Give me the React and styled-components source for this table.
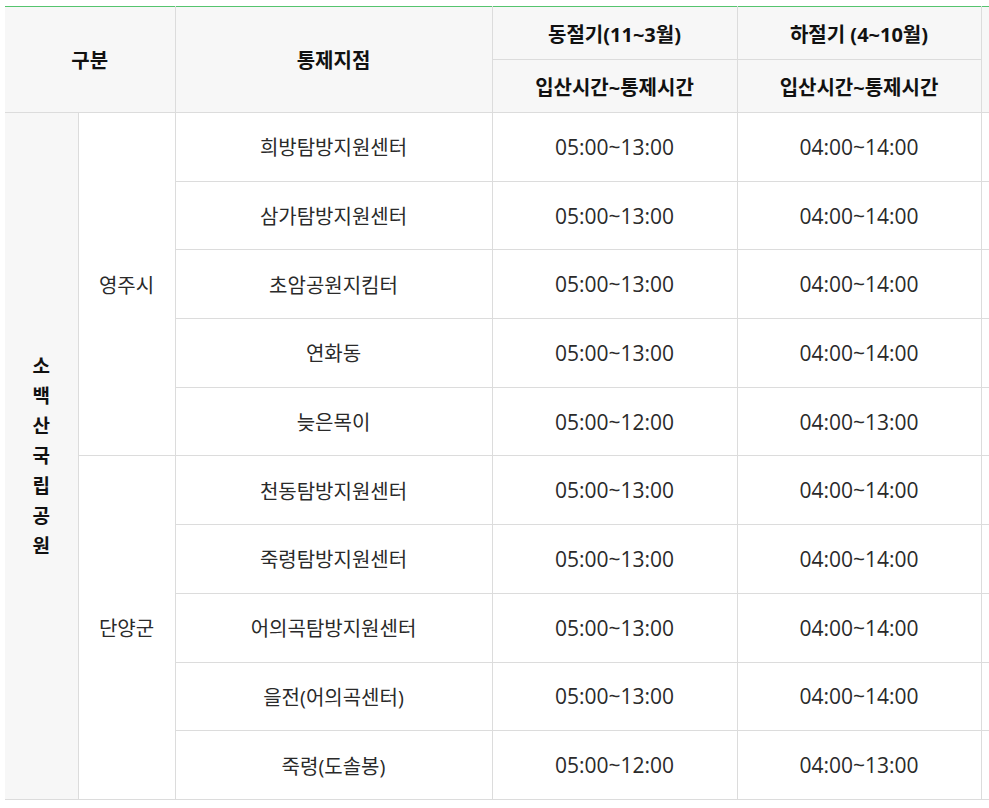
import styled, { createGlobalStyle } from "styled-components";

const GlobalStyle = createGlobalStyle`
  html, body {
    margin: 0;
    padding: 0;
    background: #fff;
  }
  body {
    font-family: "Open Sans", "Noto Sans CJK KR", sans-serif;
    color: #333;
  }
`;

const rows = [
  { name: "희방탐방지원센터", winter: "05:00~13:00", summer: "04:00~14:00" },
  { name: "삼가탐방지원센터", winter: "05:00~13:00", summer: "04:00~14:00" },
  { name: "초암공원지킴터", winter: "05:00~13:00", summer: "04:00~14:00" },
  { name: "연화동", winter: "05:00~13:00", summer: "04:00~14:00" },
  { name: "늦은목이", winter: "05:00~12:00", summer: "04:00~13:00" },
  { name: "천동탐방지원센터", winter: "05:00~13:00", summer: "04:00~14:00" },
  { name: "죽령탐방지원센터", winter: "05:00~13:00", summer: "04:00~14:00" },
  { name: "어의곡탐방지원센터", winter: "05:00~13:00", summer: "04:00~14:00" },
  { name: "을전(어의곡센터)", winter: "05:00~13:00", summer: "04:00~14:00" },
  { name: "죽령(도솔봉)", winter: "05:00~12:00", summer: "04:00~13:00" },
];

const groups = [
  { city: "영주시", from: 0, span: 5 },
  { city: "단양군", from: 5, span: 5 },
];

const App = () => {
  return (
    <>
      <GlobalStyle />
      <Wrapper>
        <Table>
          <colgroup>
            <col style={{ width: 73 }} />
            <col style={{ width: 97 }} />
            <col style={{ width: 317 }} />
            <col style={{ width: 245 }} />
            <col style={{ width: 244 }} />
            <col style={{ width: 200 }} />
          </colgroup>
          <thead>
            <HeadRow>
              <Th colSpan={2} rowSpan={2}>구분</Th>
              <Th rowSpan={2}>통제지점</Th>
              <Th>동절기(11~3월)</Th>
              <Th>하절기 (4~10월)</Th>
              <Th rowSpan={2}></Th>
            </HeadRow>
            <HeadRow>
              <Th>입산시간~통제시간</Th>
              <Th>입산시간~통제시간</Th>
            </HeadRow>
          </thead>
          <tbody>
            {rows.map((row, i) => {
              const group = groups.find((g) => g.from === i);
              return (
                <BodyRow key={row.name}>
                  {i === 0 && (
                    <ParkCell rowSpan={rows.length}>
                      {"소백산국립공원".split("").map((ch, k) => (
                        <VerticalChar key={k}>{ch}</VerticalChar>
                      ))}
                    </ParkCell>
                  )}
                  {group && <Td rowSpan={group.span}>{group.city}</Td>}
                  <Td>{row.name}</Td>
                  <Td $time>{row.winter}</Td>
                  <Td $time>{row.summer}</Td>
                  <Td></Td>
                </BodyRow>
              );
            })}
          </tbody>
        </Table>
      </Wrapper>
    </>
  );
};

export default App;

const Wrapper = styled.div`
  width: 989px;
  overflow: hidden;
  padding: 6px 0 0 5px;
  box-sizing: border-box;
`;

const Table = styled.table`
  width: 1176px;
  table-layout: fixed;
  border-collapse: collapse;
  border-top: 1px solid #55c46e;
  border-bottom: 1px solid #dcdcdc;
`;

const HeadRow = styled.tr`
  height: 53px;
`;

const Th = styled.th`
  background: #f7f7f7;
  border: 1px solid #dcdcdc;
  border-top: none;
  border-left: none;
  color: #111;
  font-size: 20px;
  font-weight: 700;
  text-align: center;
  vertical-align: middle;
  padding: 0;
`;

const BodyRow = styled.tr`
  height: 68.7px;
`;

const Td = styled.td`
  border: 1px solid #dcdcdc;
  border-left: none;
  color: #2a2a2a;
  font-size: ${(p) => (p.$time ? "21px" : "20px")};
  text-align: center;
  vertical-align: middle;
  padding: 0;
`;

const ParkCell = styled.td`
  background: #f7f7f7;
  border: 1px solid #dcdcdc;
  border-left: none;
  text-align: center;
  vertical-align: middle;
  padding: 0;
`;

const VerticalChar = styled.span`
  display: block;
  color: #111;
  font-size: 19px;
  font-weight: 700;
  line-height: 30px;
`;
